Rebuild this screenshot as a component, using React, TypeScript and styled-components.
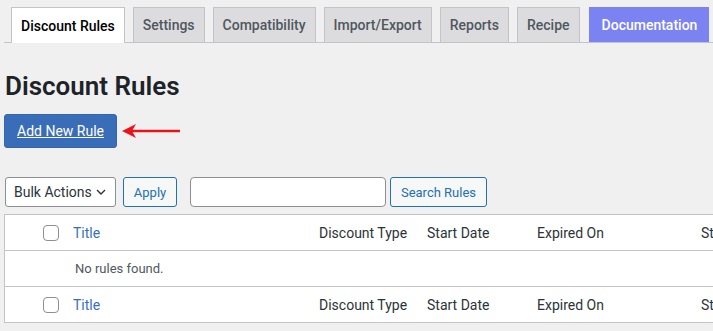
import React from "react";
import styled, { createGlobalStyle } from "styled-components";

const GlobalStyle = createGlobalStyle`
  html, body {
    margin: 0;
    padding: 0;
    background: #f0f0f1;
    overflow: hidden;
  }
  body {
    font-family: Roboto, "Liberation Sans", sans-serif;
    font-size: 14px;
    color: #1d2327;
  }
`;

const Page = styled.div`
  padding-left: 4px;
  width: 820px;
`;

const TabBar = styled.nav`
  display: flex;
  gap: 8px;
  margin-top: 7px;
  padding-left: 7px;
  border-bottom: 1px solid #c3c4c7;
`;

const Tab = styled.a<{ $active?: boolean; $accent?: boolean }>`
  display: flex;
  align-items: center;
  padding: ${(p) => (p.$accent ? "0 11px 0 12px" : "0 9px")};
  margin-left: ${(p) => (p.$accent ? "1px" : "0")};
  box-sizing: border-box;
  border: 1px solid ${(p) => (p.$accent ? "#7b82f2" : "#c3c4c7")};
  border-bottom: none;
  margin-bottom: ${(p) => (p.$active ? "-1px" : "0")};
  height: ${(p) => (p.$active ? "36px" : "35px")};
  background: ${(p) => (p.$active ? "#fff" : p.$accent ? "#7b82f2" : "#dcdcde")};
  color: ${(p) => (p.$active ? "#000" : p.$accent ? "#fff" : "#50575e")};
  font-size: 14px;
  font-weight: 500;
  text-decoration: none;
`;

const Heading = styled.h1`
  margin: 26px 0 0 1px;
  font-size: 26px;
  font-weight: 600;
  line-height: 34px;
  color: #1d2327;
`;

const AddRow = styled.div`
  display: flex;
  align-items: center;
  gap: 5px;
  margin-top: 11px;
`;

const PrimaryButton = styled.a`
  display: flex;
  align-items: center;
  justify-content: center;
  width: 113px;
  height: 34px;
  box-sizing: border-box;
  background: #3a6db7;
  border: 1px solid #3566ad;
  border-radius: 3px;
  color: #fff;
  font-size: 14px;
  text-decoration: underline;
`;

const Toolbar = styled.div`
  display: flex;
  align-items: center;
  margin-top: 29px;
  padding-left: 1px;
`;

const Select = styled.div`
  display: flex;
  align-items: center;
  justify-content: space-between;
  width: 111px;
  height: 30px;
  box-sizing: border-box;
  padding: 0 8px 0 8px;
  background: #fff;
  border: 1px solid #8c8f94;
  border-radius: 3px;
  color: #2c3338;
  font-size: 14px;
`;

const OutlineButton = styled.button<{ $width: number; $gap: number }>`
  width: ${(p) => p.$width}px;
  height: 30px;
  margin-left: ${(p) => p.$gap}px;
  background: #f6f7f7;
  border: 1px solid #2271b1;
  border-radius: 3px;
  color: #2271b1;
  font-family: inherit;
  font-size: 13px;
  padding: 0;
`;

const SearchInput = styled.input`
  width: 196px;
  height: 30px;
  box-sizing: border-box;
  margin-left: 13px;
  background: #fff;
  border: 1px solid #8c8f94;
  border-radius: 4px;
  padding: 0 8px;
`;

const Table = styled.div`
  margin-top: 7px;
  background: #fff;
  border: 1px solid #c3c4c7;
`;

const Row = styled.div<{ $divider?: boolean }>`
  display: grid;
  grid-template-columns: 68px 246px 108px 110px 164px 1fr;
  align-items: center;
  height: 35px;
  border-top: ${(p) => (p.$divider ? "1px solid #c3c4c7" : "none")};
`;

const Cell = styled.div<{ $link?: boolean }>`
  color: ${(p) => (p.$link ? "#3870c2" : "#2c3338")};
  font-size: 14px;
  white-space: nowrap;
`;

const Check = styled.span`
  display: block;
  width: 16px;
  height: 16px;
  margin-left: 38px;
  box-sizing: border-box;
  border: 1px solid #8c8f94;
  border-radius: 4px;
  background: #fff;
`;

const Empty = styled.div`
  height: 35px;
  display: flex;
  align-items: center;
  padding-left: 70px;
  border-top: 1px solid #c3c4c7;
  color: #50575e;
  font-size: 13px;
`;

const tabs = [
  "Discount Rules",
  "Settings",
  "Compatibility",
  "Import/Export",
  "Reports",
  "Recipe",
];

const columns = ["Discount Type", "Start Date", "Expired On", "Status"];

const HeaderRow: React.FC<{ divider?: boolean }> = ({ divider }) => (
  <Row $divider={divider}>
    <Check />
    <Cell $link>Title</Cell>
    {columns.map((c) => (
      <Cell key={c}>{c}</Cell>
    ))}
  </Row>
);

const App: React.FC = () => {
  return (
    <Page>
      <GlobalStyle />
      <TabBar>
        {tabs.map((t, i) => (
          <Tab key={t} $active={i === 0}>
            {t}
          </Tab>
        ))}
        <Tab $accent>Documentation</Tab>
      </TabBar>
      <Heading>Discount Rules</Heading>
      <AddRow>
        <PrimaryButton>Add New Rule</PrimaryButton>
        <svg width="58" height="16" viewBox="0 0 58 16">
          <path d="M8 8 H58" stroke="#e8141c" strokeWidth="2.4" />
          <path d="M0 8 L14 1 L10 8 L14 15 Z" fill="#e8141c" />
        </svg>
      </AddRow>
      <Toolbar>
        <Select>
          Bulk Actions
          <svg width="12" height="12" viewBox="0 0 12 12">
            <path d="M2 4 L6 8 L10 4" fill="none" stroke="#2c3338" strokeWidth="1.4" />
          </svg>
        </Select>
        <OutlineButton $width={54} $gap={7}>
          Apply
        </OutlineButton>
        <SearchInput />
        <OutlineButton $width={97} $gap={4}>
          Search Rules
        </OutlineButton>
      </Toolbar>
      <Table>
        <HeaderRow />
        <Empty>No rules found.</Empty>
        <HeaderRow divider />
      </Table>
    </Page>
  );
};

export default App;
